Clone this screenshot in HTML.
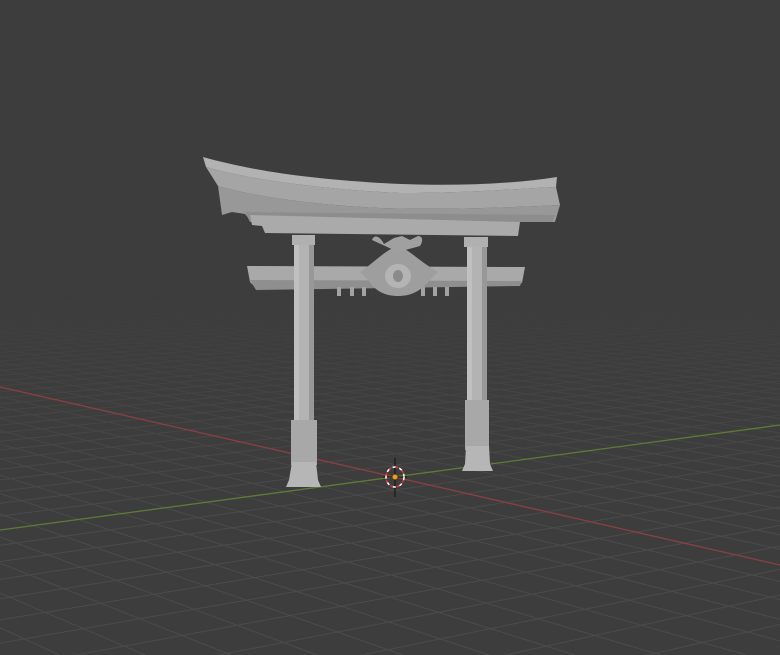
<!DOCTYPE html>
<html><head><style>
html,body{margin:0;padding:0;background:#3d3d3d;width:780px;height:655px;overflow:hidden}
svg{display:block}
</style></head><body>
<svg id="s" width="780" height="655" viewBox="0 0 780 655" xmlns="http://www.w3.org/2000/svg">
<defs>
<linearGradient id="fg" x1="0" y1="0" x2="0" y2="1">
<stop offset="0.45" stop-color="#fff" stop-opacity="0"/>
<stop offset="0.62" stop-color="#fff" stop-opacity="0.6"/>
<stop offset="0.8" stop-color="#fff" stop-opacity="1"/>
</linearGradient>
<mask id="m"><rect width="780" height="655" fill="url(#fg)"/></mask>
</defs>
<rect width="780" height="655" fill="#3d3d3d"/>
<g id="grid" stroke="#4b4b4b" stroke-width="1" fill="none" mask="url(#m)"></g>
<line x1="0" y1="387" x2="780" y2="565" stroke="#8a3f42" stroke-width="1.3"/>
<line x1="0" y1="530" x2="780" y2="425" stroke="#5f7a35" stroke-width="1.3"/>
<g fill="#a3a3a3" stroke="none">
 <path d="M203,157 L206,167 C250,180 330,190 400,193 C470,193 530,188 556,187 L557,177 C500,186 430,186 380,183 C300,178 250,170 203,157Z" fill="#b2b2b2"/>
 <path d="M206,167 C250,180 330,190 400,193 C470,193 530,188 556,187 L560,205 C500,208 440,210 380,208 C320,205 260,198 218,186 Z" fill="#a5a5a5"/>
 <path d="M218,186 L222,215 L232,212 L245,214 L250,220 L555,222 L560,205 C500,208 440,210 380,208 C320,205 260,198 218,186Z" fill="#989898"/>
 <path d="M245,212 L555,215 L552,222 L250,222Z" fill="#8d8d8d"/>
 <path d="M250,215 L520,222 L518,236 L265,233 L262,226 L252,225Z" fill="#aaaaaa"/>
 <path d="M247,266 L525,267 L522,283 L500,286 L300,288 L256,288 L250,282Z" fill="#a9a9a9"/>
 <path d="M250,280 L522,281 L520,286 L256,290Z" fill="#8f8f8f"/>
 <rect x="337" y="287" width="4" height="9"/><rect x="350" y="287" width="4" height="9"/><rect x="362" y="287" width="4" height="9"/>
 <rect x="421" y="287" width="4" height="9"/><rect x="433" y="287" width="4" height="9"/><rect x="445" y="287" width="4" height="9"/>
 <path d="M360,272 C375,262 385,250 398,246 C410,250 420,262 438,272 L430,280 C420,292 410,296 398,296 C386,296 376,292 368,280Z" fill="#9e9e9e"/>
 <ellipse cx="398" cy="276" rx="13" ry="12" fill="#b4b4b4"/>
 <ellipse cx="398" cy="276" rx="5" ry="6" fill="#8a8a8a"/>
 <path d="M372,240 C374,234 380,236 384,244 L394,238 L402,236 L410,240 L418,236 C422,236 424,240 420,246 L398,252Z" fill="#a0a0a0"/>
 <rect x="292" y="235" width="23" height="10" fill="#b0b0b0"/>
 <rect x="294" y="245" width="20" height="215" fill="#b3b3b3"/>
 <rect x="294" y="245" width="5" height="215" fill="#c0c0c0"/>
 <rect x="309" y="245" width="5" height="215" fill="#989898"/>
 <rect x="291" y="420" width="26" height="45" fill="#a8a8a8"/>
 <path d="M292,462 L316,462 L318,480 L321,487 L286,487 L289,480Z" fill="#b6b6b6"/>
 <rect x="464" y="237" width="24" height="10" fill="#b0b0b0"/>
 <rect x="467" y="247" width="20" height="200" fill="#b3b3b3"/>
 <rect x="467" y="247" width="5" height="200" fill="#c0c0c0"/>
 <rect x="482" y="247" width="5" height="200" fill="#989898"/>
 <rect x="465" y="400" width="24" height="50" fill="#a8a8a8"/>
 <path d="M466,446 L489,446 L490,464 L493,471 L462,471 L465,464Z" fill="#b6b6b6"/>
</g>
<line x1="395" y1="458" x2="395" y2="497" stroke="#111" stroke-width="1"/>
<line x1="383" y1="477" x2="407" y2="477" stroke="#111" stroke-width="1"/>
<ellipse cx="395" cy="477" rx="9" ry="10" fill="none" stroke="#fff" stroke-width="1.5" stroke-dasharray="4 3"/>
<ellipse cx="395" cy="477" rx="9" ry="10" fill="none" stroke="#d33" stroke-width="1.5" stroke-dasharray="3 4" stroke-dashoffset="4"/>
<circle cx="395" cy="477" r="2.5" fill="#f29a1c"/>
</svg>
<script>
(function(){
var g=document.getElementById('grid'),O=[395,477],Vr=[-1040,150],Vg=[2823,150],a=0.024,b=0.0144;
function P(x,y){var d=1+x*a+y*b;return [(O[0]+x*a*Vr[0]+y*b*Vg[0])/d,(O[1]+x*a*Vr[1]+y*b*Vg[1])/d,d];}
var s='';
function seg(pts){var out='';for(var i=0;i<pts.length-1;i++){var p=pts[i],q=pts[i+1];if(p[2]>0.02&&q[2]>0.02&&p[2]<6&&q[2]<6)out+='<line x1="'+p[0].toFixed(1)+'" y1="'+p[1].toFixed(1)+'" x2="'+q[0].toFixed(1)+'" y2="'+q[1].toFixed(1)+'"/>';}return out;}
for(var k=-41;k<=85;k++){var p1=[],p2=[];for(var t=-65;t<=140;t+=1){p1.push(P(k,t));p2.push(P(t,k));}s+=seg(p1)+seg(p2);}
g.innerHTML=s;
})();
</script>
</body></html>
